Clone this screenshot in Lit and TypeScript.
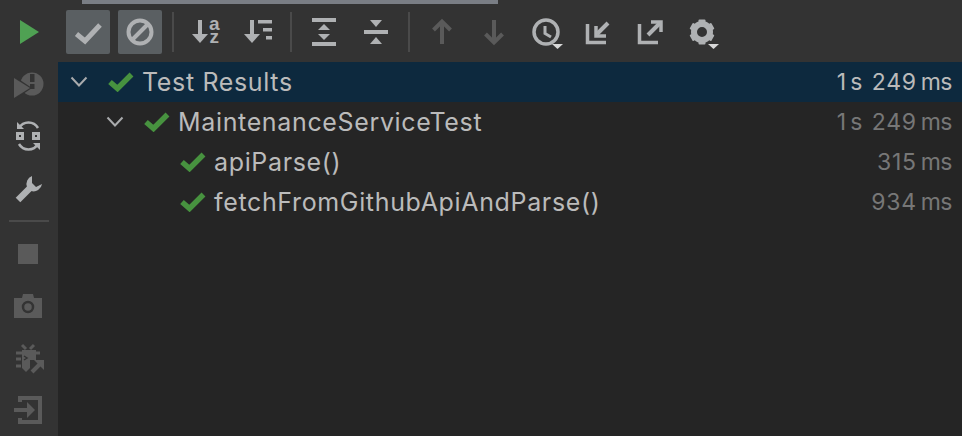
import { LitElement, html, css, svg } from "lit";
import { customElement } from "lit/decorators.js";

const LIGHT = "#afb1b3";
const DIM = "#5a5a5a";
const GREEN = "#4fa153";
const CHECK_GREEN = "#47923f";

// every toolbar icon is drawn in the same 44x44 box
const icon = (body: unknown) => html`<svg width="44" height="44" viewBox="0 0 44 44">${body}</svg>`;

const caret = (x: number) => svg`<polygon points="${x},34 ${x + 11},34 ${x + 5.5},39" fill="#d8d8d8" />`;

const gearTeeth = [0, 60, 120, 180, 240, 300].map(
  (a) => svg`<rect x="18.5" y="9.5" width="7" height="5" rx="1" fill="${LIGHT}" transform="rotate(${a} 22 22)" />`
);

const icons = {
  play: svg`<polygon points="13,10 32,22 13,34" fill="${GREEN}" />`,
  rerunFailed: svg`
    <circle cx="25" cy="22" r="11.5" fill="${DIM}" />
    <polygon points="7,14 25,26 7,38" fill="#333" />
    <polygon points="7,16 23,26 7,36" fill="${DIM}" />
    <rect x="23" y="12" width="4.5" height="8" fill="#333" />
    <rect x="23" y="22" width="4.5" height="5" fill="#333" />`,
  autoTest: svg`
    <g fill="none" stroke="${LIGHT}">
      <rect x="10.5" y="19.5" width="5" height="5" stroke-width="3" />
      <rect x="26.5" y="19.5" width="5" height="5" stroke-width="3" />
      <path d="M12 14 A11 11 0 0 1 31 14" stroke-width="2.5" />
      <path d="M12 30 A11 11 0 0 0 31 30" stroke-width="2.5" />
    </g>
    <polygon points="10,8 17,15 10,15" fill="${LIGHT}" />
    <polygon points="33,36 26,29 33,29" fill="${LIGHT}" />`,
  wrench: svg`
    <path d="M11 34 L24 21" stroke="${LIGHT}" stroke-width="6.5" fill="none" />
    <path d="M25 10 A8.5 8.5 0 0 0 20 21 L24 25 A8.5 8.5 0 0 0 35 18 L29 21 L25 17 Z" fill="${LIGHT}" />`,
  stop: svg`<rect x="11" y="12" width="20" height="20" fill="${DIM}" />`,
  camera: svg`
    <path d="M7 14 H15 L16 10 H26 L27 14 H35 V34 H7 Z" fill="${DIM}" />
    <circle cx="21" cy="23" r="5" fill="${DIM}" stroke="#333" stroke-width="2.5" />`,
  bug: svg`
    <g stroke="${DIM}" fill="none" stroke-width="3">
      <path d="M15 9 L19 13 M27 9 L23 13" />
      <path d="M9 17 H33 M9 23 H14 M9 30 H14" />
    </g>
    <path d="M15 14 H29 V24 H23 V32 L19 36 L15 32 Z" fill="${DIM}" />
    <path d="M17 24 L20 22 L17 20" stroke="#333" stroke-width="1.5" fill="none" />
    <path d="M25 36 L35 26" stroke="${DIM}" stroke-width="4" fill="none" />
    <polygon points="27,24 37,24 37,34" fill="${DIM}" />`,
  exit: svg`
    <path d="M13 14 V10 H33 V34 H13 V30" stroke="${DIM}" stroke-width="4" fill="none" />
    <rect x="7" y="20" width="14" height="4" fill="${DIM}" />
    <polygon points="20,14 28,22 20,30" fill="${DIM}" />`,
  check: svg`<path d="M10.5 24 L19 31 L34 15" stroke="${LIGHT}" stroke-width="5" fill="none" />`,
  ban: svg`
    <circle cx="22" cy="22" r="11.5" stroke="${LIGHT}" stroke-width="4" fill="none" />
    <path d="M15 29 L29 15" stroke="${LIGHT}" stroke-width="4" />`,
  sortAz: svg`
    <path d="M16 10 V30" stroke="${LIGHT}" stroke-width="4" />
    <polygon points="8,24 24,24 16,33" fill="${LIGHT}" />
    <text x="25" y="20" class="glyph">a</text>
    <text x="25.500" y="33" class="glyph">z</text>`,
  sortDuration: svg`
    <path d="M16 10 V30" stroke="${LIGHT}" stroke-width="4" />
    <polygon points="8,24 24,24 16,33" fill="${LIGHT}" />
    <rect x="22" y="10" width="14" height="3.5" fill="${LIGHT}" />
    <rect x="27" y="18" width="9" height="3.5" fill="${LIGHT}" />
    <rect x="30" y="26" width="6" height="3.5" fill="${LIGHT}" />`,
  expand: svg`
    <rect x="10" y="8" width="24" height="4" fill="${LIGHT}" />
    <rect x="10" y="32" width="24" height="4" fill="${LIGHT}" />
    <polygon points="22,14 16,20 28,20" fill="${LIGHT}" />
    <polygon points="16,24 28,24 22,30" fill="${LIGHT}" />`,
  collapse: svg`
    <rect x="10" y="20" width="24" height="4" fill="${LIGHT}" />
    <polygon points="16,10 28,10 22,17" fill="${LIGHT}" />
    <polygon points="22,27 16,34 28,34" fill="${LIGHT}" />`,
  up: svg`<path d="M22 34 V12 M13.5 20 L22 11.5 L30.500 20" stroke="${DIM}" stroke-width="4" fill="none" />`,
  down: svg`<path d="M22 10 V32 M13.5 24 L22 32.500 L30.500 24" stroke="${DIM}" stroke-width="4" fill="none" />`,
  history: svg`
    <circle cx="22" cy="22" r="12" stroke="${LIGHT}" stroke-width="3.500" fill="none" />
    <path d="M21 16 V23.500 L27 27" stroke="${LIGHT}" stroke-width="3" fill="none" />
    ${caret(28)}`,
  importTests: svg`
    <path d="M11.500 14 V32.500 H30" stroke="${LIGHT}" stroke-width="3.500" fill="none" />
    <path d="M32 13 L21 24" stroke="${LIGHT}" stroke-width="4" fill="none" />
    <path d="M20 16 V26 H30" stroke="${LIGHT}" stroke-width="3.500" fill="none" />`,
  exportTests: svg`
    <path d="M11.500 14 V32.500 H30" stroke="${LIGHT}" stroke-width="3.500" fill="none" />
    <path d="M20 25 L32 13" stroke="${LIGHT}" stroke-width="4" fill="none" />
    <path d="M23 12 H33 V22" stroke="${LIGHT}" stroke-width="3.500" fill="none" />`,
  gear: svg`
    ${gearTeeth}
    <circle cx="22" cy="22" r="8" fill="none" stroke="${LIGHT}" stroke-width="6" />
    ${caret(28)}`,
};

const chevron = html`<svg class="chevron" width="18" height="12" viewBox="0 0 18 12">
  <path d="M1.500 1.500 L9 9.500 L16.500 1.500" stroke="#a9abad" stroke-width="2" fill="none" />
</svg>`;

const passed = html`<svg class="passed" width="26" height="20" viewBox="0 0 26 20">
  <path d="M2 10 L9.500 16.500 L23.500 2.500" stroke="${CHECK_GREEN}" stroke-width="5.500" fill="none" />
</svg>`;

interface Row {
  name: string;
  depth: number;
  open?: boolean;
  selected?: boolean;
  secs?: string;
  ms: string;
}

const rows: Row[] = [
  { name: "Test Results", depth: 0, open: true, selected: true, secs: "1", ms: "249" },
  { name: "MaintenanceServiceTest", depth: 1, open: true, secs: "1", ms: "249" },
  { name: "apiParse()", depth: 2, ms: "315" },
  { name: "fetchFromGithubApiAndParse()", depth: 2, ms: "934" },
];

@customElement("app-root")
export class AppRoot extends LitElement {
  static styles = css`
    :host {
      display: flex;
      width: 962px;
      height: 436px;
      overflow: hidden;
      background: #252525;
      font-family: Inter, "Noto Sans", sans-serif;
    }
    .side {
      display: flex;
      flex-direction: column;
      align-items: center;
      gap: 8px;
      width: 58px;
      flex: none;
      padding-top: 10px;
      box-sizing: border-box;
      background: #333333;
    }
    .side .line {
      width: 40px;
      height: 2px;
      margin: 2px 0;
      background: #4a4a4a;
    }
    .main {
      flex: 1;
      display: flex;
      flex-direction: column;
      min-width: 0;
    }
    .top {
      background: #333333;
      height: 62px;
      flex: none;
    }
    .strip {
      width: 416px;
      height: 4px;
      margin-left: 24px;
      background: #7a7e85;
    }
    .tools {
      display: flex;
      align-items: center;
      gap: 8px;
      padding: 6px 0 0 8px;
    }
    .tool {
      width: 44px;
      height: 44px;
      flex: none;
      border-radius: 2px;
    }
    .tool.on {
      background: #5a5f62;
    }
    svg {
      display: block;
    }
    .glyph {
      font: bold 19px "Liberation Sans", sans-serif;
      fill: #afb1b3;
    }
    .sep {
      width: 2px;
      height: 40px;
      margin: 0 2px;
      background: #4a4a4a;
    }
    .row {
      display: flex;
      align-items: center;
      height: 40px;
      padding-right: 10px;
      font-size: 25px;
      letter-spacing: 0.65px;
      color: #bbbbbb;
    }
    .row.selected {
      background: #0d293e;
    }
    .chevron-slot {
      width: 38px;
      flex: none;
    }
    .passed {
      flex: none;
      margin-right: 8px;
    }
    .name {
      flex: 1;
      white-space: nowrap;
    }
    .time {
      font-size: 23px;
      letter-spacing: 0;
      color: #777777;
      white-space: nowrap;
    }
    .row.selected .time {
      color: #bbbbbb;
    }
    .time .num {
      margin-left: 10px;
      letter-spacing: 0.7px;
    }
    .time .unit {
      margin-left: 4px;
      letter-spacing: -0.5px;
    }
  `;

  private renderRow(r: Row) {
    const first = r.secs
      ? html`<span>${r.secs}</span><span class="unit">s</span>`
      : "";
    return html`
      <div class="row ${r.selected ? "selected" : ""}" style="padding-left:${12 + r.depth * 36}px">
        <div class="chevron-slot">${r.open ? chevron : ""}</div>
        ${passed}
        <div class="name">${r.name}</div>
        <div class="time">${first}<span class="num">${r.ms}</span><span class="unit">ms</span></div>
      </div>
    `;
  }

  render() {
    return html`
      <div class="side">
        ${icon(icons.play)} ${icon(icons.rerunFailed)} ${icon(icons.autoTest)} ${icon(icons.wrench)}
        <div class="line"></div>
        ${icon(icons.stop)} ${icon(icons.camera)} ${icon(icons.bug)} ${icon(icons.exit)}
      </div>
      <div class="main">
        <div class="top">
          <div class="strip"></div>
          <div class="tools">
            <div class="tool on">${icon(icons.check)}</div>
            <div class="tool on">${icon(icons.ban)}</div>
            <div class="sep"></div>
            <div class="tool">${icon(icons.sortAz)}</div>
            <div class="tool">${icon(icons.sortDuration)}</div>
            <div class="sep"></div>
            <div class="tool">${icon(icons.expand)}</div>
            <div class="tool">${icon(icons.collapse)}</div>
            <div class="sep"></div>
            <div class="tool">${icon(icons.up)}</div>
            <div class="tool">${icon(icons.down)}</div>
            <div class="tool">${icon(icons.history)}</div>
            <div class="tool">${icon(icons.importTests)}</div>
            <div class="tool">${icon(icons.exportTests)}</div>
            <div class="tool">${icon(icons.gear)}</div>
          </div>
        </div>
        ${rows.map((r) => this.renderRow(r))}
      </div>
    `;
  }
}
